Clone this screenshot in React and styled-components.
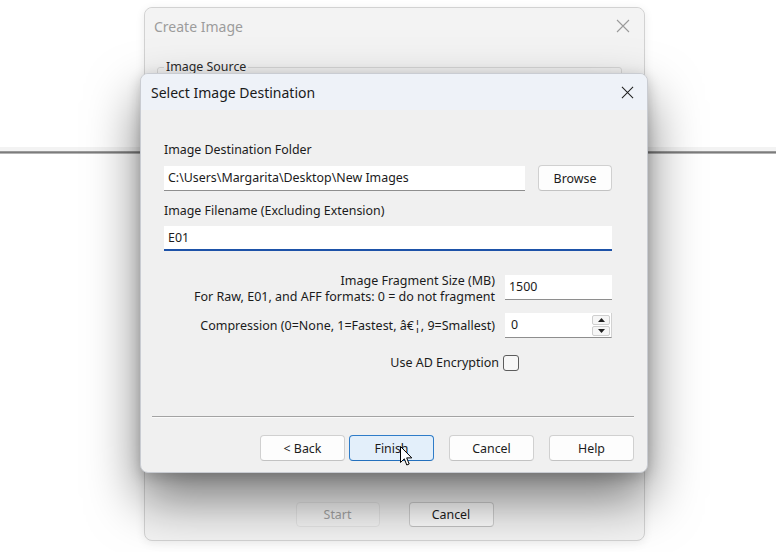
import React from 'react';
import styled, { createGlobalStyle } from 'styled-components';

const GlobalStyle = createGlobalStyle`
  html, body { margin: 0; padding: 0; background: #ffffff; }
  body { font-family: "Noto Sans", "Open Sans", sans-serif; color: #1b1b1b; }
  * { box-sizing: border-box; }
`;

const Desktop = styled.div`
  position: relative;
  width: 776px;
  height: 552px;
  overflow: hidden;
  background: #ffffff;
`;

// toolbar edge of the app behind the dialogs
const Rule = styled.div`
  margin-top: 147px;
  height: 7px;
  background: linear-gradient(
    to bottom,
    #f3f3f3 0 4px,
    #9a9a9a 4px 5px,
    #7c7c7c 5px 6px,
    #b4b4b4 6px 7px
  );
`;

const Window = styled.div`
  position: absolute;
  left: ${(p) => p.$left}px;
  top: ${(p) => p.$top}px;
  width: ${(p) => p.$width}px;
  height: ${(p) => p.$height}px;
  display: flex;
  flex-direction: column;
  border-radius: 8px;
  overflow: hidden;
`;

const BackWindow = styled(Window)`
  background: #f3f3f3;
  border: 1px solid #d2d2d2;
  box-shadow: 0 2px 10px rgba(0, 0, 0, 0.08);
`;

const FrontWindow = styled(Window)`
  background: #f0f0f0;
  border: 1px solid #c9ccd2;
  overflow: visible;
  box-shadow: 0 26px 52px rgba(0, 0, 0, 0.5), 0 4px 14px rgba(0, 0, 0, 0.18);
`;

const TitleBar = styled.div`
  height: ${(p) => p.$height}px;
  flex: none;
  display: flex;
  align-items: center;
  justify-content: space-between;
  padding: 0 ${(p) => p.$padRight}px 0 ${(p) => p.$padLeft}px;
  background: ${(p) => p.$bg};
  border-radius: 7px 7px 0 0;
`;

const Title = styled.span`
  font-size: 14px;
  color: ${(p) => (p.$inactive ? '#9c9c9c' : '#1a1a1a')};
`;

const CloseIcon = ({ color, size }) => (
  <svg width={size} height={size} viewBox="0 0 14 14">
    <path d="M1 1 L13 13 M13 1 L1 13" stroke={color} strokeWidth="1.1" fill="none" />
  </svg>
);

const GroupBox = styled.fieldset`
  margin: 15px 22px 0 12px;
  padding: 0;
  height: 300px;
  border: 1px solid #d8d8d8;
  border-radius: 3px;
  legend {
    margin-left: 6px;
    padding: 0 2px;
    font-size: 12.4px;
    line-height: 16px;
    color: #2a2a2a;
  }
`;

const BackFooter = styled.div`
  margin-top: auto;
  display: flex;
  justify-content: center;
  gap: 29px;
  padding-bottom: 13px;
`;

const Button = styled.button`
  flex: none;
  width: ${(p) => p.$width || 85}px;
  height: ${(p) => p.$height || 26}px;
  padding: 0;
  font-family: inherit;
  font-size: 12.4px;
  color: ${(p) => (p.$disabled ? '#a3a3a3' : '#1b1b1b')};
  background: ${(p) => (p.$primary ? '#e3effa' : p.$disabled ? '#f5f5f5' : '#fdfdfd')};
  border: 1px solid ${(p) => (p.$primary ? '#2f7cc8' : p.$disabled ? '#e6e6e6' : '#d0d0d0')};
  border-bottom-color: ${(p) => (p.$primary ? '#2470bd' : p.$disabled ? '#e6e6e6' : '#c2c2c2')};
  border-radius: 4px;
  cursor: default;
`;

const Body = styled.div`
  flex: 1;
  display: flex;
  flex-direction: column;
  padding: 32px 35px 0 23px;
`;

const FieldLabel = styled.div`
  font-size: 12.4px;
  line-height: 16px;
  margin-bottom: 7px;
`;

const FieldGroup = styled.div`
  display: flex;
  flex-direction: column;
  margin-bottom: ${(p) => p.$after}px;
`;

const InputRow = styled.div`
  display: flex;
  align-items: center;
  gap: 13px;
`;

const TextBox = styled.div`
  flex: ${(p) => (p.$grow ? '1 1 auto' : 'none')};
  width: ${(p) => (p.$width ? `${p.$width}px` : 'auto')};
  height: 25px;
  display: flex;
  align-items: center;
  padding: 0 4px;
  margin-bottom: ${(p) => p.$lift || 0}px;
  background: #ffffff;
  font-size: 12.4px;
  white-space: nowrap;
  border-bottom: ${(p) => (p.$focused ? '2px solid #1d52a8' : '1px solid #8e8e8e')};
`;

const Form = styled.div`
  display: flex;
  flex-direction: column;
  gap: 8px;
`;

const FormRow = styled.div`
  display: flex;
  align-items: center;
  justify-content: flex-end;
  gap: ${(p) => p.$gap || 10}px;
  margin-top: ${(p) => p.$top || 0}px;
  padding-right: ${(p) => p.$padRight || 0}px;
`;

const RowLabel = styled.div`
  font-size: 12.5px;
  line-height: 16px;
  text-align: right;
  white-space: nowrap;
`;

const SpinBox = styled.div`
  width: 107px;
  height: 25px;
  display: flex;
  align-items: flex-start;
  background: #ffffff;
  border-bottom: 1px solid #8e8e8e;
  border-right: 1px solid #d2d2d2;
  font-size: 12.4px;
`;

const SpinValue = styled.span`
  flex: 1;
  padding: 3px 6px 0;
`;

const SpinButtons = styled.div`
  display: flex;
  flex-direction: column;
  gap: 1px;
  margin: 2px 1px 0 0;
`;

const SpinArrow = styled.div`
  width: 18px;
  height: 10px;
  display: flex;
  align-items: center;
  justify-content: center;
  background: #f6f6f6;
  border: 1px solid #cfcfcf;
  border-radius: 2px;
`;

const Triangle = ({ down }) => (
  <svg width="7" height="4" viewBox="0 0 7 4">
    <polygon points={down ? '0,0 7,0 3.5,4' : '0,4 7,4 3.5,0'} fill="#222" />
  </svg>
);

const CheckBox = styled.div`
  width: 16px;
  height: 16px;
  border: 1px solid #5c5c5c;
  border-radius: 3px;
  background: #f7f7f7;
`;

const Footer = styled.div`
  margin-top: auto;
  padding: 0 13px 11px 11px;
`;

const Separator = styled.div`
  height: 1px;
  background: #a3a3a3;
  box-shadow: 0 1px 0 #fafafa;
  margin-bottom: 18px;
`;

const ButtonBar = styled.div`
  display: flex;
  justify-content: flex-end;
  gap: 15px;
`;

const ButtonPair = styled.div`
  display: flex;
  gap: 4px;
`;

const Cursor = styled.svg`
  position: absolute;
  left: 400px;
  top: 446px;
  pointer-events: none;
`;

export default function App() {
  return (
    <Desktop>
      <GlobalStyle />
      <Rule />

      <BackWindow $left={144} $top={7} $width={501} $height={534}>
        <TitleBar $height={36} $padLeft={9} $padRight={14} $bg="#f3f3f3">
          <Title $inactive>Create Image</Title>
          <CloseIcon color="#9a9a9a" size={14} />
        </TitleBar>
        <GroupBox>
          <legend>Image Source</legend>
        </GroupBox>
        <BackFooter>
          <Button $disabled $width={84} $height={25}>Start</Button>
          <Button $width={85} $height={25}>Cancel</Button>
        </BackFooter>
      </BackWindow>

      <FrontWindow $left={140} $top={73} $width={508} $height={400}>
        <TitleBar $height={36} $padLeft={10} $padRight={13} $bg="#eef2f8">
          <Title>Select Image Destination</Title>
          <CloseIcon color="#1f1f1f" size={13} />
        </TitleBar>

        <Body>
          <FieldGroup $after={12}>
            <FieldLabel>Image Destination Folder</FieldLabel>
            <InputRow>
              <TextBox $grow>C:\Users\Margarita\Desktop\New Images</TextBox>
              <Button $width={74}>Browse</Button>
            </InputRow>
          </FieldGroup>

          <FieldGroup $after={22}>
            <FieldLabel>Image Filename (Excluding Extension)</FieldLabel>
            <TextBox $focused>E01</TextBox>
          </FieldGroup>

          <Form>
            <FormRow>
              <RowLabel>
                Image Fragment Size (MB)
                <br />
                For Raw, E01, and AFF formats: 0 = do not fragment
              </RowLabel>
              <TextBox $width={107} $lift={4}>1500</TextBox>
            </FormRow>
            <FormRow>
              <RowLabel>Compression (0=None, 1=Fastest, â€¦, 9=Smallest)</RowLabel>
              <SpinBox>
                <SpinValue>0</SpinValue>
                <SpinButtons>
                  <SpinArrow><Triangle /></SpinArrow>
                  <SpinArrow><Triangle down /></SpinArrow>
                </SpinButtons>
              </SpinBox>
            </FormRow>
            <FormRow $top={9} $padRight={93} $gap={4}>
              <RowLabel>Use AD Encryption</RowLabel>
              <CheckBox />
            </FormRow>
          </Form>
        </Body>

        <Footer>
          <Separator />
          <ButtonBar>
            <ButtonPair>
              <Button>&lt; Back</Button>
              <Button $primary>Finish</Button>
            </ButtonPair>
            <Button>Cancel</Button>
            <Button>Help</Button>
          </ButtonBar>
        </Footer>
      </FrontWindow>

      <Cursor width="13" height="21" viewBox="0 0 13 21">
        <path
          d="M0.5 0.5 L0.5 16.5 L4.3 12.8 L6.8 19 L9.2 18 L6.7 11.9 L11.8 11.9 Z"
          fill="#ffffff"
          stroke="#000000"
          strokeWidth="1"
          strokeLinejoin="round"
        />
      </Cursor>
    </Desktop>
  );
}
